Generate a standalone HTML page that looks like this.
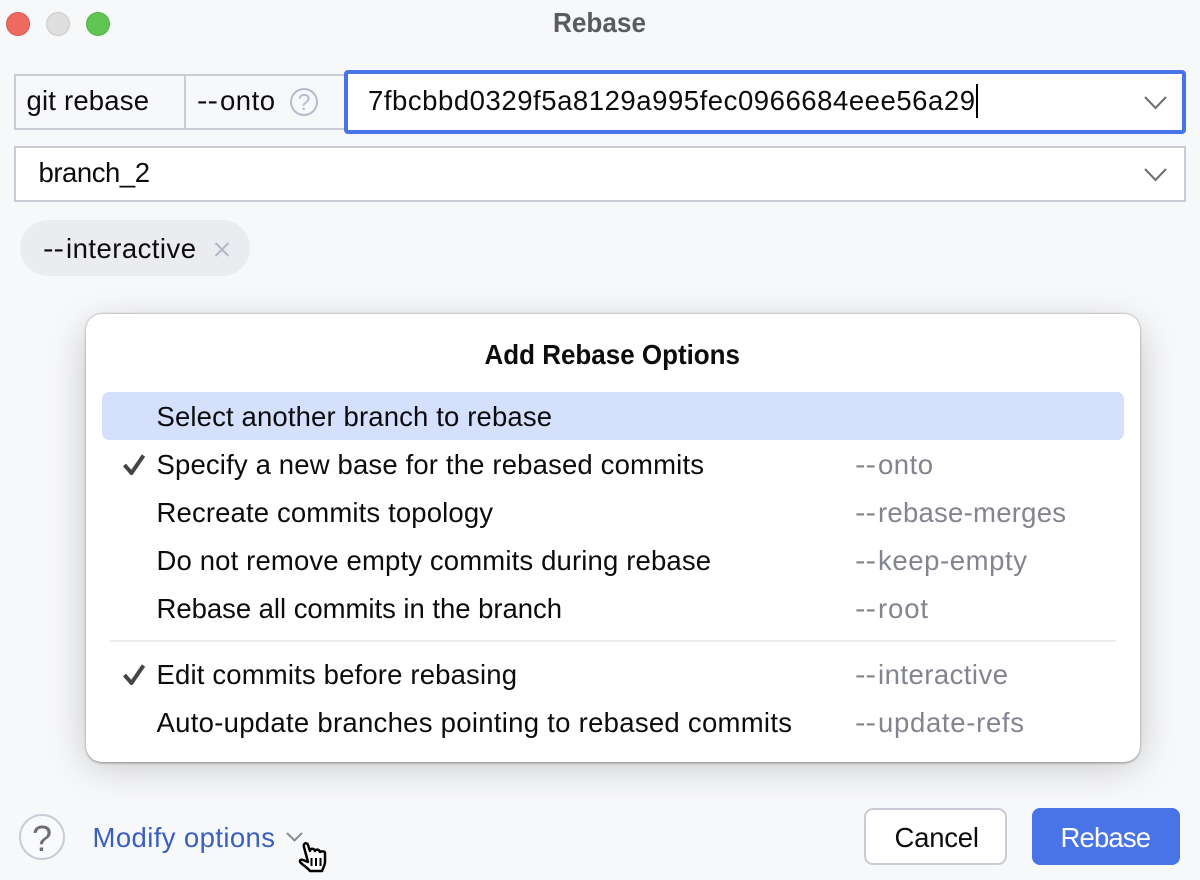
<!DOCTYPE html>
<html><head><meta charset="utf-8"><title>Rebase</title>
<style>
html,body{margin:0;padding:0;width:1200px;height:880px;overflow:hidden;background:#f7f8fa}
svg{display:block}
text{font-family:"Liberation Sans",sans-serif;font-size:27.5px;fill:#0c0c0e}
.g{fill:#828490}
.b{font-weight:700}
</style></head><body>
<svg width="1200" height="880" viewBox="0 0 1200 880" xmlns="http://www.w3.org/2000/svg">
<defs>
<filter id="sh" x="-15%" y="-25%" width="130%" height="150%"><feGaussianBlur stdDeviation="20"/></filter>
<filter id="sh2" x="-5%" y="-5%" width="110%" height="110%"><feGaussianBlur stdDeviation="1.2"/></filter>
</defs>
<rect width="1200" height="880" fill="#f7f8fa"/>
<!-- traffic lights -->
<circle cx="18" cy="24" r="11.5" fill="#ee6a5f" stroke="#d9574d" stroke-width="1"/>
<circle cx="58" cy="24" r="11.5" fill="#dfdfdf" stroke="#cbcbcb" stroke-width="1"/>
<circle cx="98" cy="24" r="11.5" fill="#61c554" stroke="#55b248" stroke-width="1"/>
<text x="553" y="32" class="b" style="fill:#5a5b5e" textLength="93" lengthAdjust="spacingAndGlyphs">Rebase</text>
<!-- top row -->
<rect x="15" y="75" width="330" height="54" fill="#f7f8fa" stroke="#c9ccd6" stroke-width="2"/>
<rect x="184" y="75" width="2" height="54" fill="#c9ccd6"/>
<text x="26.500" y="110" textLength="122.500" lengthAdjust="spacing">git rebase</text>
<text x="197" y="110" textLength="21" lengthAdjust="spacingAndGlyphs">--</text>
<text x="220" y="110" textLength="55" lengthAdjust="spacing">onto</text>
<circle cx="304" cy="102" r="13" fill="none" stroke="#b6bac9" stroke-width="2"/>
<text x="304" y="110" text-anchor="middle" style="font-size:23px;fill:#b6bac9">?</text>
<rect x="346" y="72" width="838" height="60" rx="2" fill="#fff" stroke="#4874e8" stroke-width="4"/>
<text x="368" y="110" textLength="607" lengthAdjust="spacing">7fbcbbd0329f5a8129a995fec0966684eee56a29</text>
<rect x="976" y="84" width="2" height="34" fill="#000"/>
<path d="M1145 97l10.500 11l10.500-11" fill="none" stroke="#6e6e73" stroke-width="2"/>
<!-- second row -->
<rect x="15" y="147" width="1170" height="54" fill="#fff" stroke="#c9ccd6" stroke-width="2"/>
<text x="38.500" y="182" textLength="111.500" lengthAdjust="spacing">branch_2</text>
<path d="M1145 169l10.500 11l10.500-11" fill="none" stroke="#6e6e73" stroke-width="2"/>
<!-- chip -->
<rect x="20" y="220" width="230" height="56" rx="28" fill="#ebecf0"/>
<text x="43" y="258" textLength="21" lengthAdjust="spacingAndGlyphs">--</text>
<text x="66" y="258" textLength="130" lengthAdjust="spacing">interactive</text>
<path d="M215.500 243l13 13M228.500 243l-13 13" fill="none" stroke="#b4b8c6" stroke-width="2"/>
<!-- popup -->
<rect x="86" y="326" width="1054" height="440" rx="16" fill="#000" opacity=".2" filter="url(#sh)"/>
<rect x="0" y="801" width="1200" height="79" fill="#f7f8fa"/>
<rect x="86" y="314" width="1054" height="449" rx="16" fill="#000" opacity=".38" filter="url(#sh2)"/>
<rect x="86" y="314" width="1054" height="448" rx="16" fill="#fff"/>
<text x="484.500" y="364" class="b" textLength="255.500" lengthAdjust="spacingAndGlyphs">Add Rebase Options</text>
<rect x="102" y="392" width="1022" height="48" rx="7" fill="#d5e0fc"/>
<text x="156.500" y="426" textLength="395.500" lengthAdjust="spacing">Select another branch to rebase</text>
<path d="M124.500 465l7 8l12-17.500" fill="none" stroke="#454548" stroke-width="4" stroke-linejoin="round"/>
<text x="156.500" y="474" textLength="547.500" lengthAdjust="spacing">Specify a new base for the rebased commits</text>
<text x="855" y="474" class="g" textLength="21" lengthAdjust="spacingAndGlyphs">--</text>
<text x="878" y="474" class="g" textLength="55" lengthAdjust="spacing">onto</text>
<text x="156.500" y="522" textLength="336.500" lengthAdjust="spacing">Recreate commits topology</text>
<text x="855" y="522" class="g" textLength="21" lengthAdjust="spacingAndGlyphs">--</text>
<text x="878" y="522" class="g" textLength="188" lengthAdjust="spacing">rebase-merges</text>
<text x="156.500" y="570" textLength="554.500" lengthAdjust="spacing">Do not remove empty commits during rebase</text>
<text x="855" y="570" class="g" textLength="21" lengthAdjust="spacingAndGlyphs">--</text>
<text x="878" y="570" class="g" textLength="149" lengthAdjust="spacing">keep-empty</text>
<text x="156.500" y="618" textLength="405.500" lengthAdjust="spacing">Rebase all commits in the branch</text>
<text x="855" y="618" class="g" textLength="21" lengthAdjust="spacingAndGlyphs">--</text>
<text x="878" y="618" class="g" textLength="50" lengthAdjust="spacing">root</text>
<rect x="110" y="640" width="1006" height="2" fill="#ebecf0"/>
<path d="M124.500 675l7 8l12-17.500" fill="none" stroke="#454548" stroke-width="4" stroke-linejoin="round"/>
<text x="156.500" y="684" textLength="360.500" lengthAdjust="spacing">Edit commits before rebasing</text>
<text x="855" y="684" class="g" textLength="21" lengthAdjust="spacingAndGlyphs">--</text>
<text x="878" y="684" class="g" textLength="130" lengthAdjust="spacing">interactive</text>
<text x="156.500" y="732" textLength="635.500" lengthAdjust="spacing">Auto-update branches pointing to rebased commits</text>
<text x="855" y="732" class="g" textLength="21" lengthAdjust="spacingAndGlyphs">--</text>
<text x="878" y="732" class="g" textLength="146" lengthAdjust="spacing">update-refs</text>
<!-- bottom -->
<circle cx="42" cy="837" r="22" fill="#f9fafc" stroke="#c9ccd6" stroke-width="2"/>
<text x="42" y="851" text-anchor="middle" style="font-size:36px;fill:#6e6e73">?</text>
<text x="92.500" y="847" style="fill:#3a5fc0" textLength="182.500" lengthAdjust="spacing">Modify options</text>
<path d="M287 833l7.500 7.500l7.500-7.500" fill="none" stroke="#8b8d96" stroke-width="2"/>
<!-- cursor -->
<path d="M304 847c-1-4 3-5 4-2l2 6c0-3 4-3 5 0c1-2 4-2 5 1c1-1 5-1 5 1l0 9c0 3-2 6-3 9l-12 0c-2-3-6-5-9-8c-2-2-1-4 2-3l5 2z" fill="#fff" stroke="#000" stroke-width="2.500" stroke-linejoin="round"/>
<path d="M311.500 858v8M316 858v8M320.500 858v8" stroke="#000" stroke-width="2" fill="none"/>
<rect x="865" y="809" width="141" height="55" rx="8" fill="#fff" stroke="#c9ccd6" stroke-width="2"/>
<text x="894.500" y="847" textLength="84.500" lengthAdjust="spacing">Cancel</text>
<rect x="1032" y="808" width="148" height="57" rx="8" fill="#4874e8"/>
<text x="1060.500" y="847" style="fill:#fff" textLength="90.500" lengthAdjust="spacing">Rebase</text>
</svg>
</body></html>
